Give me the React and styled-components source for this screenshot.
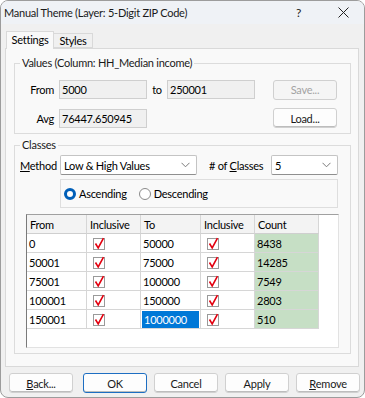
import React from 'react'
import styled, { createGlobalStyle } from 'styled-components'

const GlobalStyle = createGlobalStyle`
  html, body {
    margin: 0;
    padding: 0;
    background: #ffffff;
  }
  * {
    box-sizing: border-box;
  }
  body {
    font-family: Lato, 'Noto Sans', sans-serif;
    font-size: 11px;
    letter-spacing: -0.25px;
    color: #000;
  }
`

const rows = [
  { from: '0', to: '50000', count: '8438' },
  { from: '50001', to: '75000', count: '14285' },
  { from: '75001', to: '100000', count: '7549' },
  { from: '100001', to: '150000', count: '2803' },
  { from: '150001', to: '1000000', count: '510', selected: true },
]

const CheckMark = () => (
  <svg width="12" height="13" viewBox="0 0 12 13">
    <rect x="0.5" y="1.5" width="11" height="11" fill="#fff" stroke="#9a9a9a" />
    <path d="M2.5 6.5 L5.2 11 L10.5 1.2" fill="none" stroke="#e3000f" strokeWidth="1.6" />
  </svg>
)

const Chevron = () => (
  <svg width="9" height="6" viewBox="0 0 9 6">
    <polyline points="0.5,0.8 4.5,4.8 8.5,0.8" fill="none" stroke="#7a7a7a" strokeWidth="1" />
  </svg>
)

const App = () => {
  return (
    <>
      <GlobalStyle />
      <Window>
        <TitleBar>
          <Title>Manual Theme (Layer: 5-Digit ZIP Code)</Title>
          <Help>?</Help>
          <Close>
            <svg width="11" height="11" viewBox="0 0 11 11">
              <path d="M0.5 0.5 L10.5 10.5 M10.5 0.5 L0.5 10.5" stroke="#222" strokeWidth="1" />
            </svg>
          </Close>
        </TitleBar>
        <Body>
          <TabStrip>
            <Tab $active>Settings</Tab>
            <Tab>Styles</Tab>
          </TabStrip>
          <TabPanel>
            <GroupBox $top={6}>
              <Legend>Values (Column: HH_Median income)</Legend>
              <ValuesGrid>
                <FieldLabel>From</FieldLabel>
                <ReadOnlyField>5000</ReadOnlyField>
                <ToLabel>to</ToLabel>
                <ReadOnlyField>250001</ReadOnlyField>
                <span />
                <PushButton disabled>Save...</PushButton>
                <FieldLabel>Avg</FieldLabel>
                <ReadOnlyField>76447.650945</ReadOnlyField>
                <span />
                <span />
                <span />
                <PushButton>Load...</PushButton>
              </ValuesGrid>
            </GroupBox>
            <GroupBox $top={3}>
              <Legend>Classes</Legend>
              <MethodRow>
                <MethodLabel><u>M</u>ethod</MethodLabel>
                <Select $width={137}>
                  <span>Low &amp; High Values</span>
                  <Chevron />
                </Select>
                <ClassesLabel># of <u>C</u>lasses</ClassesLabel>
                <Select $width={67}>
                  <span>5</span>
                  <Chevron />
                </Select>
              </MethodRow>
              <RadioFrame>
                <RadioOption>
                  <RadioDot $checked />
                  Ascending
                </RadioOption>
                <RadioOption>
                  <RadioDot />
                  Descending
                </RadioOption>
              </RadioFrame>
              <Table>
                <Grid>
                  <HeadCell>From</HeadCell>
                  <HeadCell>Inclusive</HeadCell>
                  <HeadCell>To</HeadCell>
                  <HeadCell>Inclusive</HeadCell>
                  <HeadCell>Count</HeadCell>
                  {rows.map((r) => (
                    <React.Fragment key={r.from}>
                      <Cell>{r.from}</Cell>
                      <CheckCell><CheckMark /></CheckCell>
                      <Cell>{r.selected ? <Selected>{r.to}</Selected> : r.to}</Cell>
                      <CheckCell><CheckMark /></CheckCell>
                      <Cell $count>{r.count}</Cell>
                    </React.Fragment>
                  ))}
                </Grid>
              </Table>
            </GroupBox>
          </TabPanel>
          <ButtonRow>
            <PushButton $first><u>B</u>ack...</PushButton>
            <PushButton $default>OK</PushButton>
            <PushButton>Cancel</PushButton>
            <PushButton>Apply</PushButton>
            <PushButton><u>R</u>emove</PushButton>
          </ButtonRow>
        </Body>
      </Window>
    </>
  )
}

const Window = styled.div`
  width: 365px;
  height: 398px;
  border: 1px solid #9c9c9c;
  border-radius: 8px;
  overflow: hidden;
  background: #f0f0f0;
  display: flex;
  flex-direction: column;
`

const TitleBar = styled.div`
  height: 23px;
  display: flex;
  align-items: center;
  padding-left: 3px;
  background: #eff2f6;
`

const Title = styled.div`
  flex: 1;
  color: #1a1a1a;
`

const Help = styled.div`
  width: 14px;
  margin-right: 28px;
  font-size: 12px;
  color: #222;
`

const Close = styled.div`
  width: 11px;
  height: 11px;
  margin-right: 15px;
  display: flex;
`

const Body = styled.div`
  flex: 1;
  display: flex;
  flex-direction: column;
  padding-left: 4px;
`

const TabStrip = styled.div`
  height: 24px;
  display: flex;
  align-items: flex-end;
  padding-left: 1px;
`

const Tab = styled.div`
  position: relative;
  height: ${p => (p.$active ? '18px' : '15px')};
  width: ${p => (p.$active ? '48px' : '40px')};
  margin-left: ${p => (p.$active ? '0' : '-1px')};
  margin-bottom: ${p => (p.$active ? '-1px' : '0')};
  z-index: ${p => (p.$active ? 2 : 1)};
  border: 1px solid #d9d9d9;
  border-bottom: ${p => (p.$active ? 'none' : '1px solid #d9d9d9')};
  background: ${p => (p.$active ? '#f9f9f9' : '#f0f0f0')};
  display: flex;
  align-items: center;
  justify-content: center;
  padding-bottom: ${p => (p.$active ? '2px' : '0')};
`

const TabPanel = styled.div`
  width: 354px;
  height: 319px;
  border: 1px solid #d9d9d9;
  background: #f9f9f9;
  display: flex;
  flex-direction: column;
`

const GroupBox = styled.fieldset`
  margin: ${p => p.$top}px 0 0 8px;
  width: 337px;
  padding: 0 12px 5px 0;
  border: 1px solid #dcdcdc;
  min-width: 0;
`

const Legend = styled.legend`
  margin-left: 5px;
  padding: 0 2px;
  line-height: 16px;
  color: #1a1a1a;
`

const ValuesGrid = styled.div`
  margin-top: 9px;
  display: grid;
  grid-template-columns: 44px 88px 20px 88px 1fr 65px;
  grid-template-rows: 19px 20px;
  row-gap: 9px;
  align-items: center;
`

const FieldLabel = styled.div`
  text-align: right;
  padding-right: 5px;
`

const ToLabel = styled.div`
  text-align: center;
`

const ReadOnlyField = styled.div`
  height: 19px;
  border: 1px solid #cfcfcf;
  background: #f0f0f0;
  padding-left: 2px;
  display: flex;
  align-items: center;
`

const PushButton = styled.button`
  font: inherit;
  letter-spacing: inherit;
  width: 64px;
  height: 20px;
  padding: 0;
  margin-left: ${p => (p.$first ? '4px' : '0')};
  margin-right: ${p => (p.$first ? '3px' : '0')};
  border: 1px solid ${p => (p.$default ? '#1d6ec2' : '#d0d0d0')};
  border-radius: 3px;
  background: ${p => (p.disabled ? '#f5f5f5' : '#fdfdfd')};
  color: ${p => (p.disabled ? '#a3a3a3' : '#1a1a1a')};
  box-shadow: ${p => (p.disabled ? 'none' : 'inset 0 -1px 0 #bdbdbd')};
  display: flex;
  align-items: center;
  justify-content: center;
`

const MethodRow = styled.div`
  margin-top: 2px;
  display: flex;
  align-items: center;
  height: 20px;
  white-space: nowrap;
`

const MethodLabel = styled.div`
  width: 40px;
  padding-left: 5px;
`

const ClassesLabel = styled.div`
  width: 57px;
  margin-left: 12px;
`

const Select = styled.div`
  width: ${p => p.$width}px;
  height: 20px;
  margin-left: 5px;
  border: 1px solid #c4c4c4;
  border-bottom-color: #8f8f8f;
  border-radius: 2px;
  background: #fff;
  display: flex;
  align-items: center;
  justify-content: space-between;
  padding: 0 6px 0 3px;
`

const RadioFrame = styled.div`
  margin: 4px 0 0 45px;
  width: 278px;
  height: 29px;
  border: 1px solid #dedede;
  display: flex;
  align-items: center;
  padding-left: 3px;
  gap: 12px;
`

const RadioOption = styled.label`
  display: flex;
  align-items: center;
  gap: 3px;
`

const RadioDot = styled.span`
  width: 12px;
  height: 12px;
  border-radius: 50%;
  border: ${p => (p.$checked ? '3.5px solid #005fb8' : '1px solid #8a8a8a')};
  background: #fff;
`

const Table = styled.div`
  margin: 6px 0 0 11px;
  width: 313px;
  height: 134px;
  background: #fff;
  border-top: 1px solid #a0a0a0;
  border-left: 1px solid #7a7a7a;
  border-right: 1px solid #e2e2e2;
  border-bottom: 1px solid #e2e2e2;
`

const Grid = styled.div`
  display: grid;
  grid-template-columns: 60px 54px 60px 54px 64px;
  grid-auto-rows: 19px;
`

const HeadCell = styled.div`
  background: #f3f3f3;
  border-right: 1px solid #d6d6d6;
  border-bottom: 1px solid #cfcfcf;
  padding-left: 3px;
  display: flex;
  align-items: center;
`

const Cell = styled.div`
  position: relative;
  background: ${p => (p.$count ? '#c6dfc5' : '#fff')};
  border-right: 1px solid #d6d6d6;
  border-bottom: 1px solid #d6d6d6;
  padding-left: 2px;
  display: flex;
  align-items: center;
`

const CheckCell = styled.div`
  border-right: 1px solid #d6d6d6;
  border-bottom: 1px solid #d6d6d6;
  padding: 3px 0 0 6px;
  display: flex;
`

const Selected = styled.div`
  margin: 0 0 0 -1px;
  width: 57px;
  height: 17px;
  background: #0078d7;
  color: #fff;
  padding-left: 2px;
  display: flex;
  align-items: center;
`

const ButtonRow = styled.div`
  margin-top: 6px;
  display: flex;
  gap: 7px;
`

export default App
